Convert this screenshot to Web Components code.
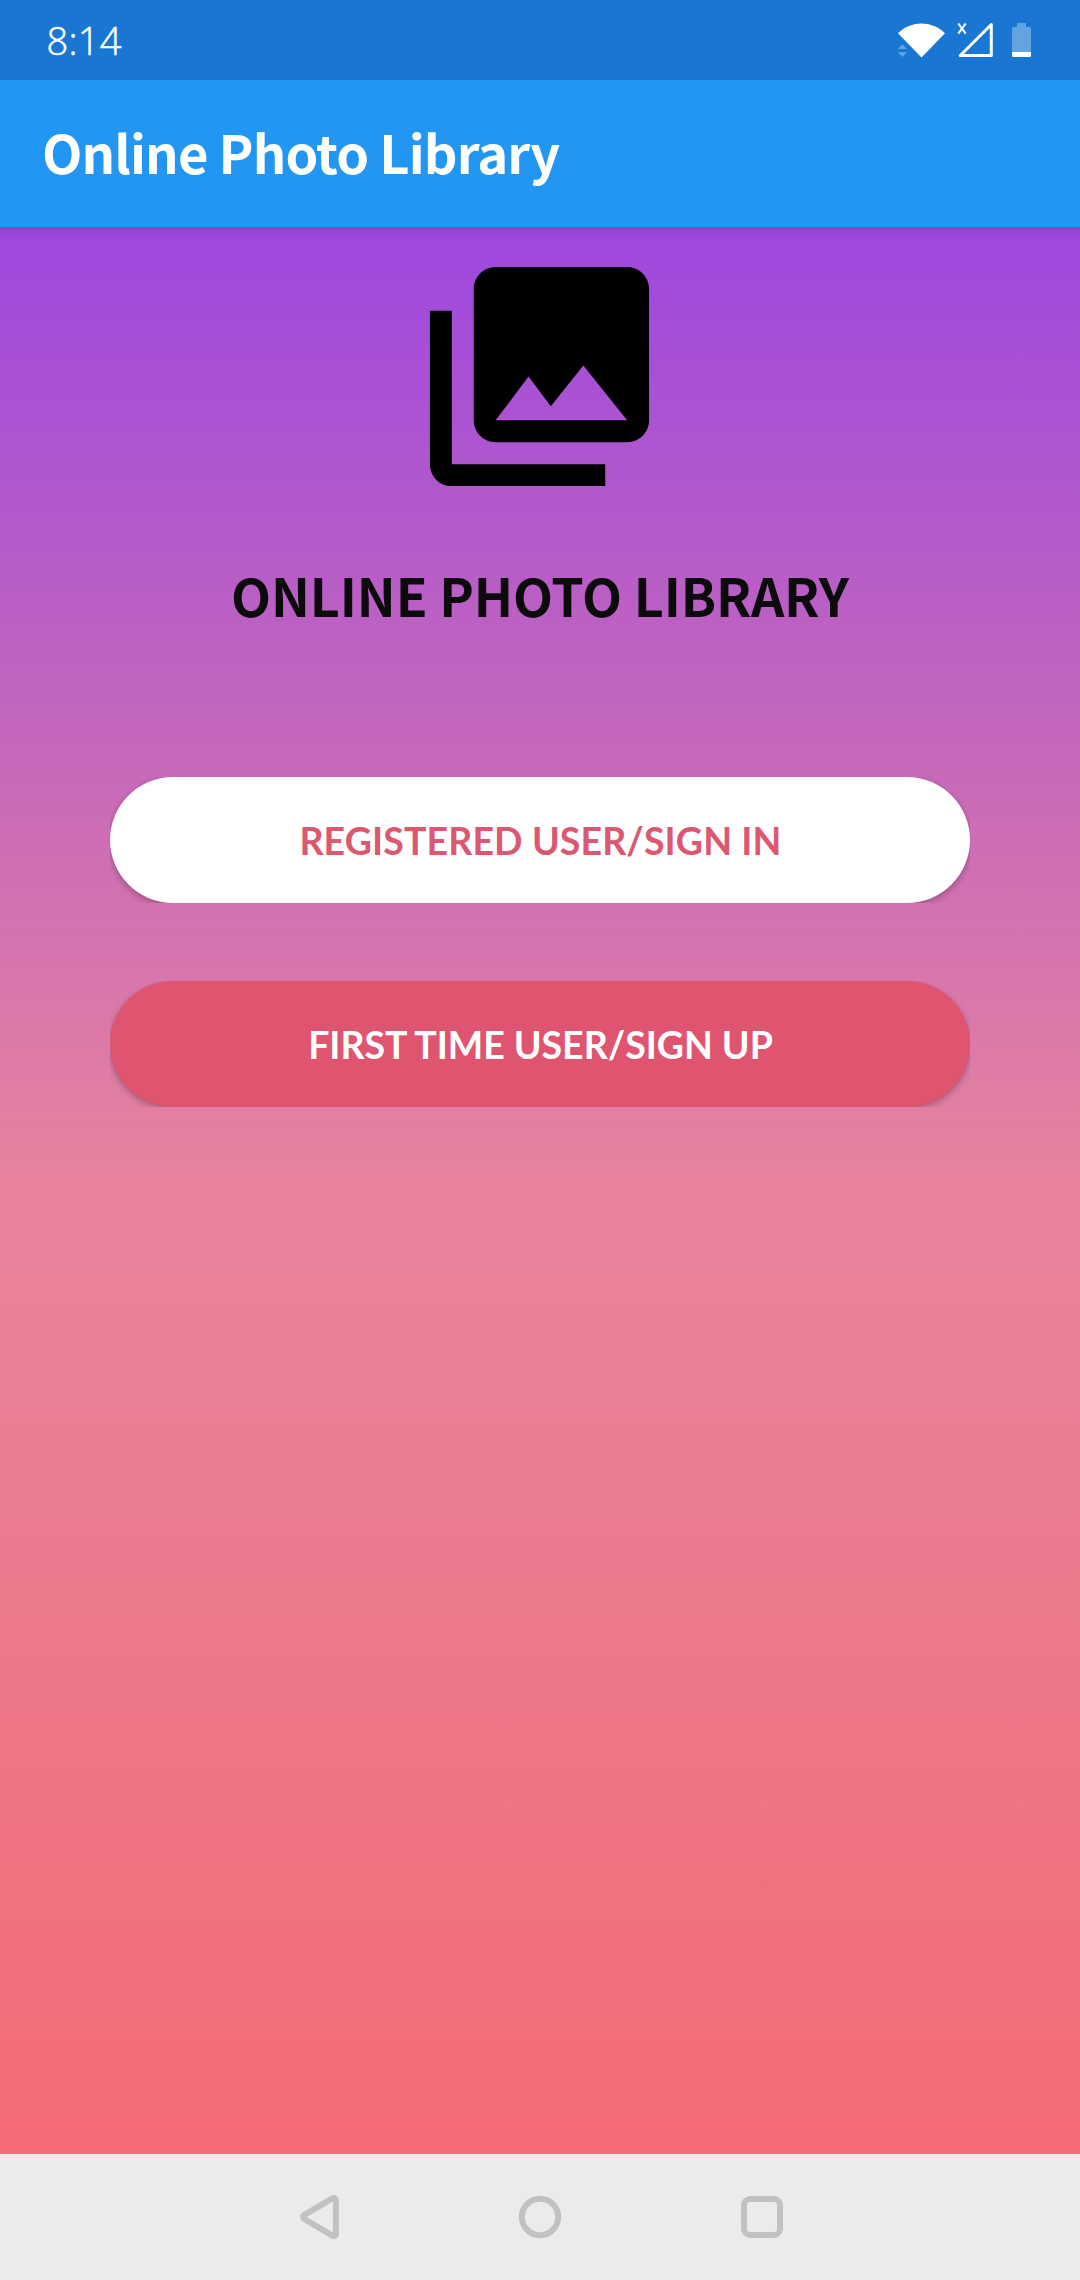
<!DOCTYPE html>
<html lang="en">
<head>
<meta charset="utf-8">
<title>Online Photo Library</title>
<style>
html,body{margin:0;padding:0}
body{width:1080px;height:2280px;overflow:hidden;font-family:"Noto Sans CJK SC","Noto Sans",sans-serif}
</style>
</head>
<body>
<phone-screen>
  <status-bar slot="status" time="8:14"></status-bar>
  <app-bar slot="bar">Online Photo Library</app-bar>
  <library-icon></library-icon>
  <hero-title>ONLINE PHOTO LIBRARY</hero-title>
  <pill-button variant="light">REGISTERED USER/SIGN IN</pill-button>
  <pill-button variant="solid">FIRST TIME USER/SIGN UP</pill-button>
  <nav-bar slot="nav"></nav-bar>
</phone-screen>
<script>
const define = (name, html) => customElements.define(name, class extends HTMLElement {
  constructor() {
    super();
    this.attachShadow({ mode: 'open' }).innerHTML = html;
  }
  connectedCallback() {
    const time = this.shadowRoot.querySelector('.time');
    if (time) time.textContent = this.getAttribute('time');
  }
});

define('phone-screen', `
<style>
:host{display:flex;flex-direction:column;width:1080px;height:2280px}
main{flex:1;display:flex;flex-direction:column;align-items:center;box-sizing:border-box;padding-top:18px;
background:linear-gradient(rgba(0,0,0,.11),rgba(0,0,0,0)) 0 0/100% 10px no-repeat,linear-gradient(#9d47df 0%,#e8849d 50%,#f36b76 100%)}
</style>
<slot name="status"></slot><slot name="bar"></slot>
<main><slot></slot></main>
<slot name="nav"></slot>`);

define('status-bar', `
<style>
:host{display:flex;align-items:center;justify-content:space-between;height:80px;flex:none;background:#1976d2;color:#fff}
.time{font:300 38px/80px "Open Sans","Noto Sans",sans-serif;padding-left:46.500px;letter-spacing:.3px;-webkit-text-stroke:.5px #fff}
svg{display:block}
</style>
<span class="time"></span>
<svg width="220" height="80" viewBox="0 0 220 80">
<path d="M38 33.3C51 20.2 72 20.2 85 33.3L61.5 57.5Z" fill="#fff"/>
<path d="M37.8 49L42.4 44.2L47 49ZM37.8 52.3H47L42.4 57Z" fill="#63a3e2"/>
<path d="M98.300 23.500L105.700 33.700M105.700 23.500L98.300 33.700" fill="none" stroke="#fff" stroke-width="2.100"/>
<path d="M131.300 24.500V55.500H100.300Z" fill="none" stroke="#fff" stroke-width="3" stroke-linejoin="round"/>
<path d="M152 28.500Q152 27 153.500 27H157V23H166V27H169.500Q171 27 171 28.500V52H152Z" fill="#63a3e2"/>
<path d="M152 52H171V55.500Q171 57 169.500 57H153.500Q152 57 152 55.500Z" fill="#fff"/>
</svg>`);

define('app-bar', `
<style>
:host{display:flex;align-items:center;height:147px;flex:none;box-sizing:border-box;padding:0 42px 5px;background:#2196f3;color:#fff;
font-weight:700;font-size:52.500px;letter-spacing:-.87px;white-space:nowrap}
</style>
<slot></slot>`);

define('library-icon', `
<style>:host{display:block;width:263px;height:263px;margin-right:2px}svg{display:block}</style>
<svg width="263" height="263" viewBox="0 0 24 24"><path d="M22 16V4c0-1.100-.9-2-2-2H8c-1.100 0-2 .9-2 2v12c0 1.100.9 2 2 2h12c1.100 0 2-.9 2-2zm-11-4l2.030 2.710L16 11l4 5H8l3-4zM2 6v14c0 1.100.9 2 2 2h14v-2H4V6H2z"/></svg>`);

define('hero-title', `
<style>
:host{display:block;height:80px;margin-top:47px;font-weight:700;font-size:52px;line-height:80px;letter-spacing:-.12px;color:#0b0b0b;white-space:nowrap}
</style>
<slot></slot>`);

define('pill-button', `
<style>
:host{display:block;width:860px;height:126px;margin-top:142px;overflow:hidden}
:host([variant=solid]){margin-top:78px;--fill:#df556f;--ink:#fff;--track:-.04px}
button{display:flex;align-items:center;justify-content:center;width:100%;height:100%;box-sizing:border-box;margin:0;padding:1px 0 0 1px;border:0;border-radius:63px;
background:var(--fill,#fff);color:var(--ink,#dc5870);font:700 37.500px/50px Lato,sans-serif;letter-spacing:var(--track,.1px);white-space:nowrap;
box-shadow:0 3px 7px rgba(0,0,0,.24),0 0 3px rgba(0,0,0,.08)}
</style>
<button><slot></slot></button>`);

define('nav-bar', `
<style>
:host{display:flex;justify-content:center;height:126px;flex:none;background:#ebebeb}
svg{display:block}
</style>
<svg width="540" height="126" viewBox="0 0 540 126" fill="none" stroke="#c1c1c1" stroke-width="6" stroke-linejoin="round">
<path d="M34.200 61L62.300 44.400Q65.900 43.200 65.900 46.500V79.800Q65.900 82.800 62.300 81.600L34.200 65Q32 63 34.200 61Z"/>
<circle cx="270" cy="63" r="18.200"/>
<rect x="474" y="45" width="36" height="36" rx="6"/>
</svg>`);
</script>
</body>
</html>
